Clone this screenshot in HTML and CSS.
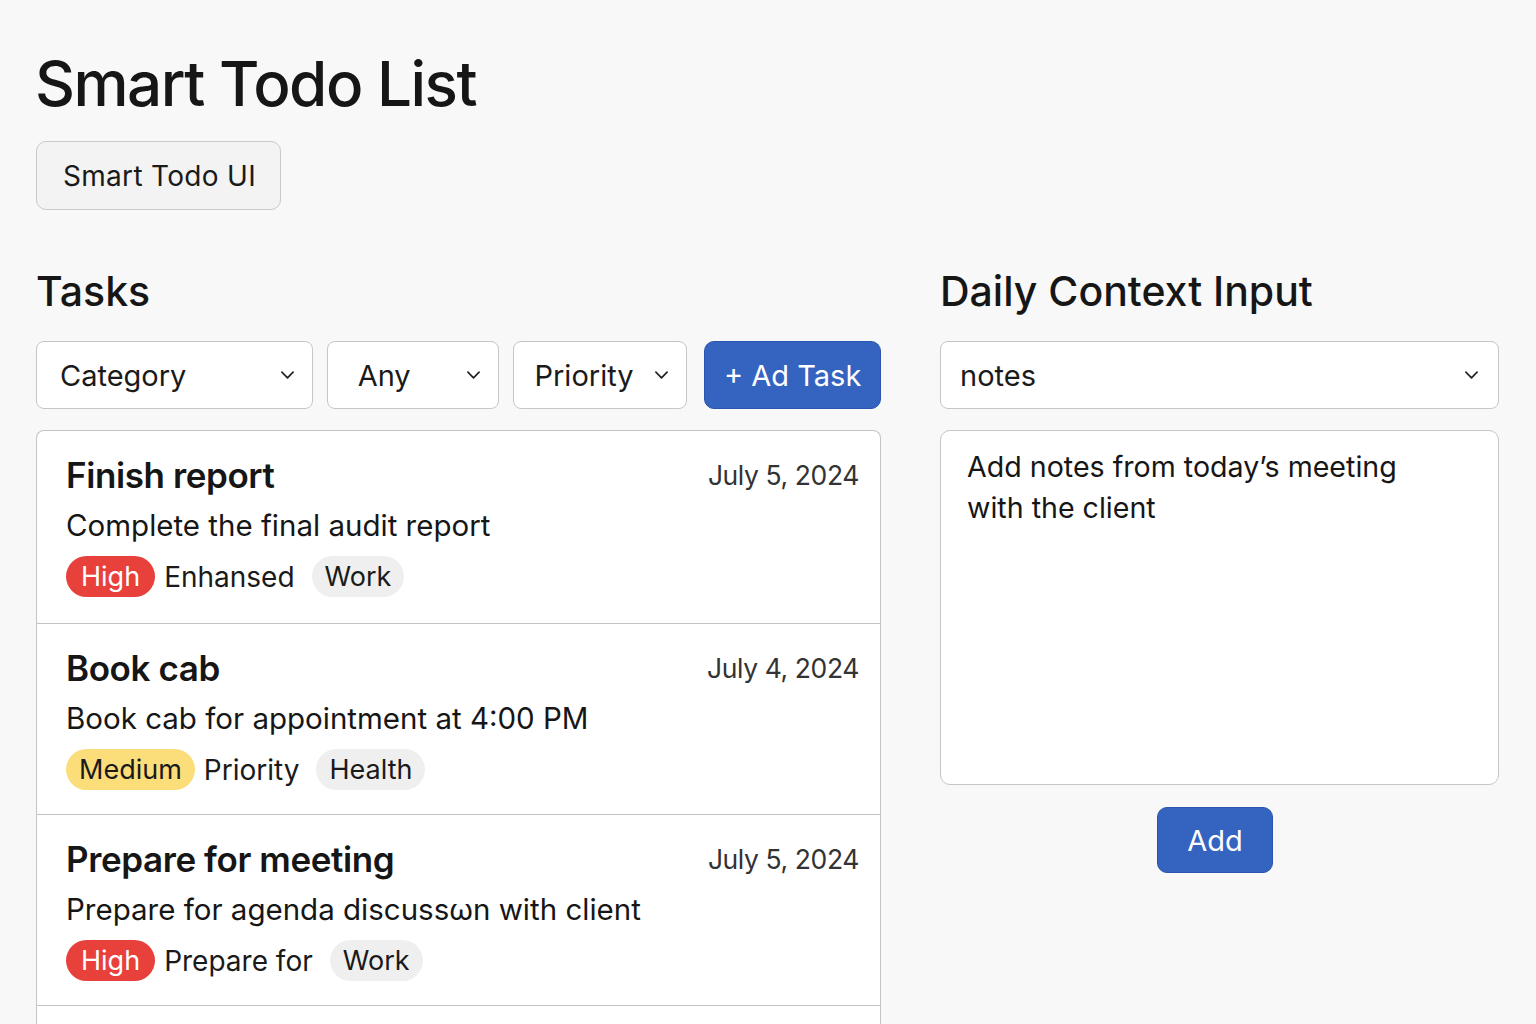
FILE: index.html
```html
<!DOCTYPE html>
<html lang="en">
<head>
<meta charset="utf-8">
<title>Smart Todo List</title>
<link rel="stylesheet" href="styles.css">
</head>
<body>
<div class="page">
  <header class="header">
    <h1 class="title">Smart Todo List</h1>
    <div class="badge">Smart Todo UI</div>
  </header>
  <main class="columns">
    <section class="tasks">
      <h2 class="section-title">Tasks</h2>
      <div class="filters">
        <div class="select select-category"><span>Category</span><svg class="chev" viewBox="0 0 14 8"><path d="M1 1l6 6 6-6"/></svg></div>
        <div class="select select-any"><span>Any</span><svg class="chev" viewBox="0 0 14 8"><path d="M1 1l6 6 6-6"/></svg></div>
        <div class="select select-priority"><span>Priority</span><svg class="chev" viewBox="0 0 14 8"><path d="M1 1l6 6 6-6"/></svg></div>
        <button class="btn btn-add-task">+ Ad Task</button>
      </div>
      <div class="task-list">
        <article class="task">
          <div class="task-head">
            <h3 class="task-title">Finish report</h3>
            <span class="task-date">July 5, 2024</span>
          </div>
          <p class="task-desc">Complete the final audit report</p>
          <div class="tags">
            <span class="pill pill-high">High</span>
            <span class="tag-text">Enhansed</span>
            <span class="pill pill-cat">Work</span>
          </div>
        </article>
        <article class="task">
          <div class="task-head">
            <h3 class="task-title">Book cab</h3>
            <span class="task-date">July 4, 2024</span>
          </div>
          <p class="task-desc">Book cab for appointment at 4:00 PM</p>
          <div class="tags">
            <span class="pill pill-medium">Medium</span>
            <span class="tag-text">Priority</span>
            <span class="pill pill-cat">Health</span>
          </div>
        </article>
        <article class="task">
          <div class="task-head">
            <h3 class="task-title">Prepare for meeting</h3>
            <span class="task-date">July 5, 2024</span>
          </div>
          <p class="task-desc">Prepare for agenda discussωn with client</p>
          <div class="tags">
            <span class="pill pill-high">High</span>
            <span class="tag-text">Prepare for</span>
            <span class="pill pill-cat">Work</span>
          </div>
        </article>
        <article class="task task-empty"></article>
      </div>
    </section>
    <section class="context">
      <h2 class="section-title">Daily Context Input</h2>
      <div class="select select-notes"><span>notes</span><svg class="chev" viewBox="0 0 14 8"><path d="M1 1l6 6 6-6"/></svg></div>
      <div class="textarea">Add notes from today’s meeting<br>with the client</div>
      <div class="actions"><button class="btn btn-add">Add</button></div>
    </section>
  </main>
</div>
</body>
</html>
```
FILE: styles.css
```css
* { box-sizing: border-box; }
html, body { margin: 0; padding: 0; }
body {
  background: #f8f8f8;
  color: #161616;
  font-family: Inter, "Noto Sans", "Liberation Sans", sans-serif;
  height: 1024px;
  overflow: hidden;
}
.page {
  padding: 46px 37px 0 35px;
}
.title {
  margin: 0;
  font-size: 62px;
  font-weight: 500;
  line-height: 76px;
  letter-spacing: -1.5px;
}
.badge {
  display: inline-flex;
  align-items: center;
  margin-top: 19px;
  margin-left: 1px;
  height: 69px;
  padding: 0 24px 0 26px;
  border: 1.5px solid #c9c9c9;
  border-radius: 10px;
  background: #f3f3f3;
  font-size: 28px;
  letter-spacing: 0.3px;
  color: #1a1a1a;
}
.columns {
  display: flex;
  gap: 59px;
  margin-top: 56px;
  padding-left: 1px;
}
.tasks { width: 845px; flex: none; }
.context { flex: 1; }
.section-title {
  margin: 0 0 25px;
  font-size: 41px;
  font-weight: 500;
  line-height: 50px;
  letter-spacing: 0;
}
.filters {
  display: flex;
  gap: 14px;
  height: 68px;
}
.select {
  display: flex;
  align-items: center;
  justify-content: space-between;
  height: 68px;
  background: #fff;
  border: 1.5px solid #c6c6c6;
  border-radius: 8px;
  font-size: 29px;
  color: #1a1a1a;
}
.select-category { width: 277px; padding: 0 18px 0 23px; }
.select-any { width: 173px; padding: 0 18px 0 30px; }
.select-priority { width: 174px; padding: 0 18px 0 20px; }
.select-notes { width: 100%; padding: 0 20px 0 19px; }
.chev {
  width: 13px;
  height: 8px;
  fill: none;
  stroke: #222;
  stroke-width: 1.8;
  stroke-linecap: round;
  stroke-linejoin: round;
}
.btn {
  font-family: inherit;
  border: 1.5px solid #2a55ad;
  background: #3563c0;
  color: #fff;
  border-radius: 10px;
  cursor: pointer;
}
.btn-add-task {
  width: 177px;
  margin-left: 3px;
  height: 68px;
  font-size: 29px;
  padding: 0;
}
.task-list {
  margin-top: 21px;
  background: #fff;
  border: 1.5px solid #c4c4c4;
  border-bottom: none;
  border-radius: 8px 8px 0 0;
}
.task {
  height: 191px;
  padding: 21px 21px 0 29px;
  border-bottom: 1.5px solid #c4c4c4;
}
.task:first-child { height: 193px; }
.task-empty { border-bottom: none; height: 40px; }
.task-head {
  display: flex;
  justify-content: space-between;
  align-items: baseline;
}
.task-title {
  margin: 0;
  font-size: 35px;
  font-weight: 600;
  line-height: 46px;
  letter-spacing: -0.4px;
}
.task-date {
  font-size: 26.5px;
  color: #333;
  letter-spacing: -0.4px;
  position: relative;
  top: -3px;
}
.task-desc {
  margin: 7px 0 0;
  font-size: 29.5px;
  line-height: 40px;
  color: #161616;
}
.tags {
  display: flex;
  align-items: center;
  gap: 9px;
  margin-top: 11px;
}
.pill {
  display: inline-flex;
  align-items: center;
  height: 41px;
  padding: 0 13px;
  border-radius: 21px;
  font-size: 27px;
}
.pill-high { background: #e8403a; color: #fff; padding: 0 15px; }
.pill-medium { background: #fbdd7a; color: #1a1a1a; }
.pill-cat { background: #efefef; color: #1a1a1a; margin-left: 8px; }
.tag-text { font-size: 28px; color: #1a1a1a; }
.textarea {
  margin-top: 21px;
  height: 355px;
  background: #fff;
  border: 1.5px solid #c6c6c6;
  border-radius: 10px;
  padding: 15px 26px;
  font-size: 28.6px;
  line-height: 41px;
  color: #161616;
}
.actions {
  display: flex;
  justify-content: center;
  margin-top: 22px;
  padding-right: 9px;
}
.btn-add {
  width: 116px;
  height: 66px;
  font-size: 29px;
  padding: 0;
}
```
